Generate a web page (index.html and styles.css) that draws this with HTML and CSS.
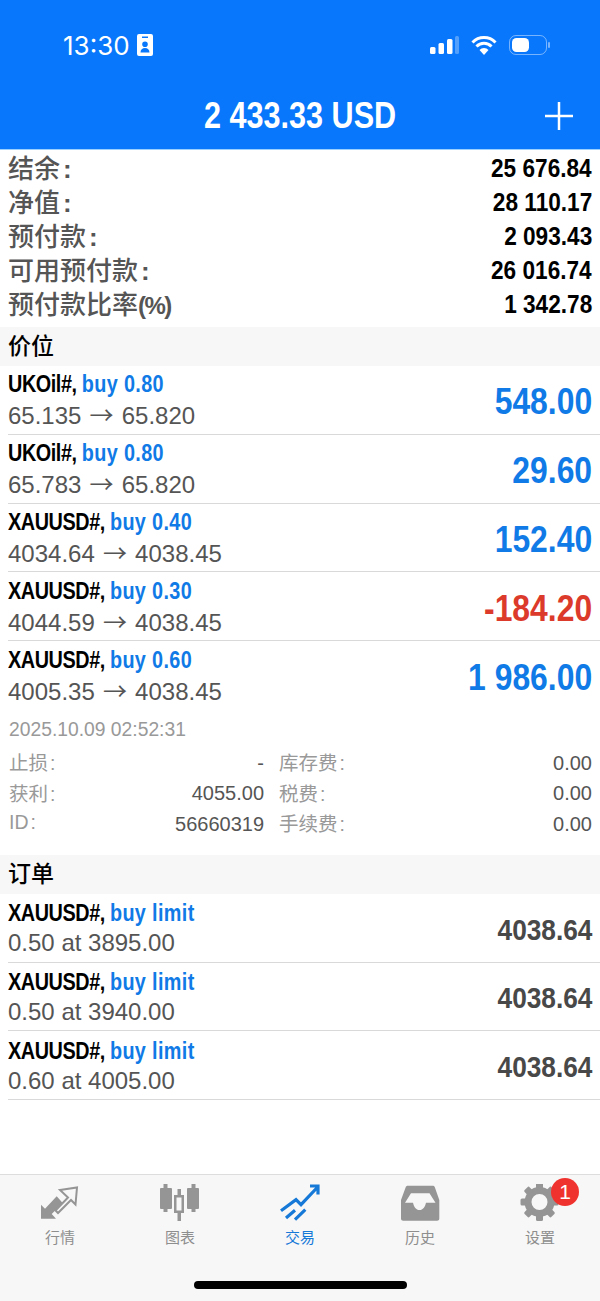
FILE: index.html
```html
<!DOCTYPE html>
<html lang="zh-CN">
<head>
  <meta charset="UTF-8" />
  <meta name="viewport" content="width=device-width, initial-scale=1.0"/>
  <title>交易</title>
  <link rel="stylesheet" href="styles.css">
</head>
<body>
  <div class="header">
    <div class="status-bar">
      <div class="clock">
        <span>13:30</span>
        <svg class="id-icon" width="16" height="22" viewBox="0 0 16 22">
          <path fill="#fff" fill-rule="evenodd" d="M2 0h12a2 2 0 0 1 2 2v18a2 2 0 0 1-2 2H2a2 2 0 0 1-2-2V2a2 2 0 0 1 2-2zM5 2.500v1.500h6V2.500zM8 7.500a2.800 2.800 0 1 1 0 5.600a2.800 2.800 0 0 1 0-5.600zM3.500 18.500c0-3 1.800-4.500 4.500-4.500s4.500 1.500 4.500 4.500z"/>
        </svg>
      </div>
      <div class="status-icons">
        <svg width="29" height="18" viewBox="0 0 29 18">
          <rect x="0" y="11" width="5.500" height="7" rx="1.500" fill="#fff"/>
          <rect x="8.500" y="7" width="5.500" height="11" rx="1.500" fill="#fff"/>
          <rect x="17" y="3" width="5.500" height="15" rx="1.500" fill="#fff"/>
          <rect x="25" y="0" width="4" height="18" rx="1.500" fill="#fff" opacity=".3"/>
        </svg>
        <svg width="26" height="20" viewBox="0 0 26 20">
          <path fill="none" stroke="#fff" stroke-width="3" d="M1.500 7.500a16 16 0 0 1 23 0M5.500 11.500a10.500 10.500 0 0 1 15 0"/>
          <path fill="#fff" d="M13 20l-4.500-5a6 6 0 0 1 9 0z"/>
        </svg>
        <svg width="41" height="20" viewBox="0 0 41 20">
          <rect x=".5" y=".5" width="37" height="19" rx="6.500" fill="none" stroke="#fff" stroke-opacity=".45"/>
          <rect x="3" y="3" width="17" height="14" rx="4.500" fill="#fff"/>
          <rect x="39" y="7" width="2" height="6" rx="1" fill="#fff" opacity=".45"/>
        </svg>
      </div>
    </div>
    <div class="title-bar">
      <h1><span class="cond">2 433.33 USD</span></h1>
      <svg class="add-icon" width="28" height="28" viewBox="0 0 28 28">
        <path stroke="#fff" stroke-width="2.500" d="M14 0v28M0 14h28"/>
      </svg>
    </div>
  </div>

  <div class="summary">
    <div class="summary-row"><span>结余<i class="colon">:</i></span><b class="cond-r">25 676.84</b></div>
    <div class="summary-row"><span>净值<i class="colon">:</i></span><b class="cond-r">28 110.17</b></div>
    <div class="summary-row"><span>预付款<i class="colon">:</i></span><b class="cond-r">2 093.43</b></div>
    <div class="summary-row"><span>可用预付款<i class="colon">:</i></span><b class="cond-r">26 016.74</b></div>
    <div class="summary-row"><span>预付款比率<i class="percent">(%)</i></span><b class="cond-r">1 342.78</b></div>
  </div>

  <div class="section-title">价位</div>

  <div class="trade-row">
    <div class="trade-info">
      <div class="trade-name cond-l">UKOil#, <span class="blue">buy 0.80</span></div>
      <div class="trade-price">65.135 <span class="arrow">→</span> 65.820</div>
    </div>
    <div class="trade-value blue cond-r">548.00</div>
  </div>
  <div class="trade-row">
    <div class="trade-info">
      <div class="trade-name cond-l">UKOil#, <span class="blue">buy 0.80</span></div>
      <div class="trade-price">65.783 <span class="arrow">→</span> 65.820</div>
    </div>
    <div class="trade-value blue cond-r">29.60</div>
  </div>
  <div class="trade-row">
    <div class="trade-info">
      <div class="trade-name cond-l">XAUUSD#, <span class="blue">buy 0.40</span></div>
      <div class="trade-price">4034.64 <span class="arrow">→</span> 4038.45</div>
    </div>
    <div class="trade-value blue cond-r">152.40</div>
  </div>
  <div class="trade-row">
    <div class="trade-info">
      <div class="trade-name cond-l">XAUUSD#, <span class="blue">buy 0.30</span></div>
      <div class="trade-price">4044.59 <span class="arrow">→</span> 4038.45</div>
    </div>
    <div class="trade-value red cond-r">-184.20</div>
  </div>
  <div class="trade-row no-line">
    <div class="trade-info">
      <div class="trade-name cond-l">XAUUSD#, <span class="blue">buy 0.60</span></div>
      <div class="trade-price">4005.35 <span class="arrow">→</span> 4038.45</div>
    </div>
    <div class="trade-value blue cond-r">1 986.00</div>
  </div>

  <div class="details">
    <div class="detail-date">2025.10.09 02:52:31</div>
    <div class="detail-grid">
      <span class="k">止损<i class="colon">:</i></span><span class="v">-</span><span class="k">库存费<i class="colon">:</i></span><span class="v">0.00</span>
      <span class="k">获利<i class="colon">:</i></span><span class="v">4055.00</span><span class="k">税费<i class="colon">:</i></span><span class="v">0.00</span>
      <span class="k">ID<i class="colon">:</i></span><span class="v">56660319</span><span class="k">手续费<i class="colon">:</i></span><span class="v">0.00</span>
    </div>
  </div>

  <div class="section-title">订单</div>

  <div class="trade-row">
    <div class="trade-info">
      <div class="trade-name cond-l">XAUUSD#, <span class="blue">buy limit</span></div>
      <div class="trade-price">0.50 at 3895.00</div>
    </div>
    <div class="order-value cond-r">4038.64</div>
  </div>
  <div class="trade-row">
    <div class="trade-info">
      <div class="trade-name cond-l">XAUUSD#, <span class="blue">buy limit</span></div>
      <div class="trade-price">0.50 at 3940.00</div>
    </div>
    <div class="order-value cond-r">4038.64</div>
  </div>
  <div class="trade-row">
    <div class="trade-info">
      <div class="trade-name cond-l">XAUUSD#, <span class="blue">buy limit</span></div>
      <div class="trade-price">0.60 at 4005.00</div>
    </div>
    <div class="order-value cond-r">4038.64</div>
  </div>

  <div class="tab-bar">
    <div class="tabs">
      <div class="tab">
        <svg width="40" height="40" viewBox="0 0 40 40">
          <path fill="#959595" d="M1 34.700V20.700l4 4L16.700 12.300l6 6.700-11 11 4.300 4.700z"/>
          <path fill="none" stroke="#959595" stroke-width="2" d="M20 6l17-2.500-1.500 17L31 16 18 29l-2.500-2.500L28 13.500z"/>
        </svg>
        <span>行情</span>
      </div>
      <div class="tab">
        <svg width="40" height="40" viewBox="0 0 40 40">
          <path fill="#959595" d="M3.500 0h4v4H11a1 1 0 0 1 1 1v19a1 1 0 0 1-1 1H7.500v3h-4v-3H1a1 1 0 0 1-1-1V5a1 1 0 0 1 1-1h2.500zM31.500 0h4v4H38a1 1 0 0 1 1 1v19a1 1 0 0 1-1 1h-2.500v3h-4v-3H28a1 1 0 0 1-1-1V5a1 1 0 0 1 1-1h3.500z"/>
          <path fill="#959595" fill-rule="evenodd" d="M17.500 5h3.500v6h3v18h-3v8h-3.500v-8h-3.500V11h3.500zM16.500 13.500v13h5v-13z"/>
        </svg>
        <span>图表</span>
      </div>
      <div class="tab active">
        <svg width="40" height="40" viewBox="0 0 40 40">
          <path fill="none" stroke="#1679d8" stroke-width="3.200" d="M1 26.700l15-11 5 5L37.700 3M30 2h8v8.500M6 34l9-7.700M15 35.700l10.300-10"/>
        </svg>
        <span>交易</span>
      </div>
      <div class="tab">
        <svg width="40" height="40" viewBox="0 0 40 40">
          <path fill="#959595" fill-rule="evenodd" d="M8 1.700H32.500c1.500 0 2 .5 2.500 2L39.300 16V34.500c0 1.500-1 2.200-2.200 2.200H3.200C2 36.700 1 36 1 34.500V16L5.500 3.700C6 2.200 6.500 1.700 8 1.700zM11 9.300L5 18.700H13C14 23 16 26 19.500 26S25 23 26 18.700H35.500L29.500 9.300z"/>
        </svg>
        <span>历史</span>
      </div>
      <div class="tab">
        <div class="gear-wrap">
          <svg width="40" height="40" viewBox="0 0 40 40">
            <g transform="translate(19.500 18)" fill="#959595">
              <circle r="11.500" fill="none" stroke="#959595" stroke-width="7"/>
              <rect x="-3.500" y="-19" width="7" height="7" rx="1.500"/>
              <rect x="-3.500" y="-19" width="7" height="7" rx="1.500" transform="rotate(45)"/>
              <rect x="-3.500" y="-19" width="7" height="7" rx="1.500" transform="rotate(90)"/>
              <rect x="-3.500" y="-19" width="7" height="7" rx="1.500" transform="rotate(135)"/>
              <rect x="-3.500" y="-19" width="7" height="7" rx="1.500" transform="rotate(180)"/>
              <rect x="-3.500" y="-19" width="7" height="7" rx="1.500" transform="rotate(225)"/>
              <rect x="-3.500" y="-19" width="7" height="7" rx="1.500" transform="rotate(270)"/>
              <rect x="-3.500" y="-19" width="7" height="7" rx="1.500" transform="rotate(315)"/>
            </g>
          </svg>
          <span class="badge">1</span>
        </div>
        <span>设置</span>
      </div>
    </div>
    <div class="home-bar"></div>
  </div>
</body>
</html>
```

FILE: styles.css
```css
* {
  box-sizing: border-box;
}

body {
  font-family: "Liberation Sans", "Noto Sans CJK SC", sans-serif;
  background-color: #fff;
  color: #000;
  margin: 0;
  width: 600px;
  height: 1301px;
  display: flex;
  flex-direction: column;
  overflow: hidden;
}

i {
  font-style: normal;
}

.blue { color: #107ae6; }
.red { color: #dc3a2b; }

/* the app font is narrower than anything installed */
.cond { display: inline-block; transform: scaleX(0.85); }
.cond-l { transform: scaleX(0.825); transform-origin: left center; white-space: nowrap; }
.cond-r { transform: scaleX(0.87); transform-origin: right center; white-space: nowrap; }

.colon {
  padding-left: 3px;
  font-weight: bold;
  font-family: "Liberation Sans", sans-serif;
}

.percent {
  letter-spacing: -1.500px;
  font-weight: bold;
  font-size: 24px;
}

.arrow {
  font-family: "Noto Sans CJK SC", sans-serif;
  margin: 0 1.500px;
}

.header {
  height: 150px;
  flex: none;
  background-color: #0877fb;
  border-bottom: 1px solid #9ad0ff;
  color: #fff;
  padding-top: 30px;
}

.status-bar {
  height: 30px;
  display: flex;
  justify-content: space-between;
  align-items: center;
  padding: 0 50px 0 63px;
}

.clock {
  display: flex;
  align-items: center;
  gap: 7px;
  font-family: "Inter", sans-serif;
  font-size: 26px;
}

.status-icons {
  display: flex;
  align-items: center;
  gap: 12px;
}

.title-bar {
  height: 56px;
  margin-top: 28px;
  display: flex;
  align-items: center;
  justify-content: center;
  position: relative;
}

.title-bar h1 {
  margin: 0;
  font-size: 36px;
  font-weight: bold;
}

.add-icon {
  position: absolute;
  right: 27px;
  top: 14px;
}

.summary {
  padding: 1px 8px 6px;
  flex: none;
}

.summary-row {
  height: 34px;
  display: flex;
  justify-content: space-between;
  align-items: center;
  font-size: 26px;
  color: #555;
}

.summary-row span {
  margin-top: -3px;
  font-weight: 500;
}

.summary-row b {
  font-size: 26px;
  color: #000;
}

.section-title {
  height: 39px;
  flex: none;
  background-color: #f7f7f7;
  font-size: 23px;
  font-weight: 500;
  line-height: 39px;
  padding-left: 8px;
}

.trade-row {
  height: 68.750px;
  flex: none;
  margin-left: 8px;
  padding-right: 8px;
  padding-bottom: 2px;
  border-bottom: 1px solid #d9d9d9;
  display: flex;
  justify-content: space-between;
  align-items: center;
}

.trade-row.no-line {
  border-bottom: none;
}

.trade-name {
  font-size: 24px;
  font-weight: bold;
  line-height: 32px;
  letter-spacing: -0.500px;
}

.trade-name .blue {
  letter-spacing: 0.450px;
}

.trade-price {
  font-size: 24px;
  line-height: 27px;
  color: #555;
}

.trade-value {
  font-size: 36px;
  font-weight: bold;
  padding-top: 7px;
  transform: scaleX(0.885);
}

.order-value {
  font-size: 30px;
  font-weight: bold;
  color: #484848;
  padding-top: 6px;
  transform: scaleX(0.875);
}

.details {
  flex: none;
  height: 145px;
  padding: 5px 8px 0 9px;
}

.detail-date {
  font-size: 19.300px;
  line-height: 30px;
  color: #999;
  margin-bottom: 3px;
}

.detail-grid {
  display: grid;
  grid-template-columns: 60px 195px 80px 248px;
  grid-auto-rows: 30.500px;
  align-items: center;
  font-size: 20px;
}

.detail-grid .k {
  color: #999;
  font-size: 19.500px;
  margin-top: -3px;
}

.detail-grid .k .colon {
  font-weight: normal;
  padding-left: 2px;
}

.detail-grid .k:nth-child(4n + 3) {
  padding-left: 15px;
  white-space: nowrap;
}

.detail-grid .v {
  color: #555;
  text-align: right;
}

.tab-bar {
  margin-top: auto;
  height: 127px;
  flex: none;
  background-color: #f7f7f7;
  border-top: 1px solid #ddd;
  padding-top: 9px;
  position: relative;
}

.tabs {
  display: grid;
  grid-template-columns: repeat(5, 1fr);
}

.tab {
  display: flex;
  flex-direction: column;
  align-items: center;
  font-size: 15px;
  color: #8e8e8e;
  gap: 2px;
}

.tab.active {
  color: #1679d8;
}

.tab svg {
  display: block;
}

.gear-wrap {
  position: relative;
  height: 40px;
}

.badge {
  position: absolute;
  left: 31px;
  top: -6px;
  width: 28px;
  height: 28px;
  border-radius: 50%;
  background-color: #f0322e;
  color: #fff;
  font-size: 21px;
  line-height: 28px;
  text-align: center;
}

.home-bar {
  position: absolute;
  left: 194px;
  bottom: 12px;
  width: 213px;
  height: 8px;
  border-radius: 4px;
  background-color: #000;
}
```
